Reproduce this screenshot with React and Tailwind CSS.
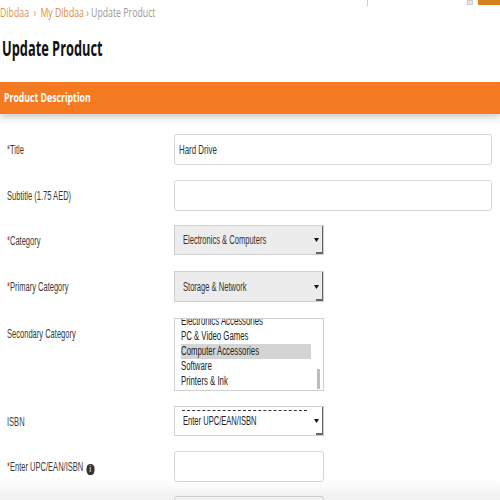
import React from "react";

const sans = "font-['Liberation_Sans',Arial,sans-serif]";
const open = "font-['Open_Sans','Liberation_Sans',sans-serif]";

function T({ children, s = "scale-x-[0.63]" }) {
  return (
    <span className={`inline-block origin-left whitespace-nowrap ${s}`}>{children}</span>
  );
}

function Arrow() {
  return (
    <div className="absolute right-0 top-0 bottom-0 w-[12px] flex items-center justify-center border-r border-r-[#666]">
      <svg width="5" height="4" viewBox="0 0 5 4"><path d="M0 0 L5 0 L2.5 4 Z" fill="#111" /></svg>
      <div className="absolute right-0 bottom-0 w-[6px] h-[2px] bg-[#666]" />
    </div>
  );
}

function Label({ req, children }) {
  return (
    <div className={`w-[174px] shrink-0 pl-[7px] h-[31px] flex items-center text-[13px] text-[#3a3a3a] ${sans}`}>
      <T s="scale-x-[0.58]">
        {req && <span className="text-[#9b2d2d]">*</span>}
        {children}
      </T>
    </div>
  );
}

export default function App() {
  return (
    <div className="w-[500px] h-[500px] overflow-hidden bg-white relative">
      <div className="h-[6px] flex items-start">
        <div className="ml-[367px] w-[1px] h-[6px] bg-[#ccc]" />
        <div className="ml-[99px] w-[6px] h-[5px] bg-[#e5e5e5] border border-[#ccc]" />
        <div className="ml-[5px] w-[22px] h-[5px] bg-[#d7801f]" />
      </div>
      <div className={`h-[14px] flex items-center text-[12px] leading-[14px] ${open}`}>
        <T s="scale-x-[0.73]">
          <span className="text-[#e1915a]">Dibdaa</span>
          <span className="text-[#e1915a] mx-[6px]">›</span>
          <span className="text-[#d9903a]">My Dibdaa</span>
          <span className="text-[#d9903a] mx-[3px]">›</span>
          <span className="text-[#9a9a9a]">Update Product</span>
        </T>
      </div>
      <div className={`mt-[14px] pl-[2px] h-[28px] leading-[28px] text-[21px] font-bold text-[#111] ${open}`}>
        <T s="scale-x-[0.61]">Update Product</T>
      </div>
      <div className={`mt-[20px] h-[32px] bg-[#f47a22] flex items-center pl-[4px] text-white font-bold text-[13px] shadow-[0_4px_6px_rgba(0,0,0,0.18)] ${open}`}>
        <T s="scale-x-[0.67]">Product Description</T>
      </div>

      <div className="mt-[20px] flex flex-col">
        <div className="flex">
          <Label req>Title</Label>
          <div className={`w-[318px] h-[31px] border border-[#d6d6d6] rounded-[3px] flex items-center pl-[4px] text-[12px] text-[#333] ${sans}`}><T s="scale-x-[0.66]">Hard Drive</T></div>
        </div>
        <div className="flex mt-[15px]">
          <Label>Subtitle (1.75 AED)</Label>
          <div className="w-[318px] h-[31px] border border-[#d6d6d6] rounded-[3px]" />
        </div>
        <div className="flex mt-[14px]">
          <Label req>Category</Label>
          <div className={`relative w-[150px] h-[30px] border border-[#cfcfcf] bg-[#ececec] flex items-center pl-[8px] text-[12px] text-[#333] ${sans}`}>
            <T>Electronics &amp; Computers</T>
            <Arrow />
          </div>
        </div>
        <div className="flex mt-[15px]">
          <Label req>Primary Category</Label>
          <div className={`relative w-[150px] h-[31px] border border-[#cfcfcf] bg-[#ececec] flex items-center pl-[8px] text-[12px] text-[#333] ${sans}`}>
            <T>Storage &amp; Network</T>
            <Arrow />
          </div>
        </div>
        <div className="flex mt-[16px]">
          <Label>Secondary Category</Label>
          <div className={`relative w-[150px] h-[73px] border border-[#cfcfcf] overflow-hidden text-[12px] text-[#222] leading-[15px] ${sans}`}>
            <div className="mt-[-5px] pl-[6px] pr-[12px]">
              <div className="h-[15px]"><T s="scale-x-[0.65]">Electronics Accessories</T></div>
              <div className="h-[15px]"><T s="scale-x-[0.65]">PC &amp; Video Games</T></div>
              <div className="h-[15px] bg-[#d4d4d4]"><T s="scale-x-[0.65]">Computer Accessories</T></div>
              <div className="h-[15px]"><T s="scale-x-[0.65]">Software</T></div>
              <div className="h-[15px]"><T s="scale-x-[0.65]">Printers &amp; Ink</T></div>
            </div>
            <div className="absolute right-[3px] top-[50px] w-[3px] h-[20px] bg-[#bdbdbd]" />
          </div>
        </div>
        <div className="flex mt-[15px]">
          <Label>ISBN</Label>
          <div className={`relative w-[150px] h-[30px] border border-[#cfcfcf] bg-white flex items-center pl-[8px] text-[12px] text-[#222] ${sans}`}>
            <div className="absolute left-[7px] right-[16px] top-[3px] border-t border-dashed border-[#333]" />
            <T>Enter UPC/EAN/ISBN</T>
            <Arrow />
          </div>
        </div>
        <div className="flex mt-[14px]">
          <div className={`w-[174px] shrink-0 pl-[7px] h-[31px] flex items-center text-[13px] text-[#3a3a3a] ${sans}`}>
            <T s="scale-x-[0.58]">
              <span className="text-[#9b2d2d]">*</span>Enter UPC/EAN/ISBN
              <span className="ml-[5px] inline-flex w-[14px] h-[11px] rounded-full bg-[#333] text-white text-[9px] leading-none items-center justify-center font-bold align-[-1px]">i</span>
            </T>
          </div>
          <div className="w-[150px] h-[31px] border border-[#d6d6d6] rounded-[3px]" />
        </div>
        <div className="flex mt-[14px]">
          <div className="w-[174px] shrink-0" />
          <div className="relative w-[150px] h-[31px] border border-[#d6d6d6] rounded-[3px]" />
        </div>
      </div>
      <div className="absolute left-0 right-0 top-[478px] h-[22px] bg-gradient-to-b from-transparent to-[rgba(0,0,0,0.06)] pointer-events-none" />
    </div>
  );
}
